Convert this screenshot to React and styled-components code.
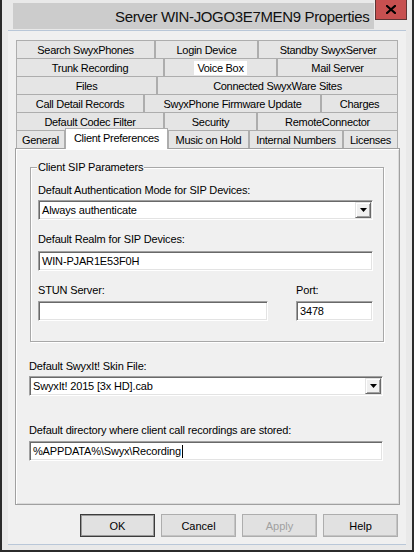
import styled, { createGlobalStyle } from "styled-components";

const GlobalStyle = createGlobalStyle`
  html, body {
    margin: 0;
    padding: 0;
    background: #ffffff;
  }
  body {
    font-family: "Liberation Sans", Arial, sans-serif;
    font-size: 11px;
    color: #000;
  }
  * {
    box-sizing: border-box;
  }
`;

const tabRows = [
  [
    { label: "Search SwyxPhones", w: 139 },
    { label: "Login Device", w: 103 },
    { label: "Standby SwyxServer", w: 140 },
  ],
  [
    { label: "Trunk Recording", w: 148 },
    { label: "Voice Box", w: 113, focus: true },
    { label: "Mail Server", w: 121 },
  ],
  [
    { label: "Files", w: 141 },
    { label: "Connected SwyxWare Sites", w: 241 },
  ],
  [
    { label: "Call Detail Records", w: 128 },
    { label: "SwyxPhone Firmware Update", w: 177 },
    { label: "Charges", w: 77 },
  ],
  [
    { label: "Default Codec Filter", w: 148 },
    { label: "Security", w: 93 },
    { label: "RemoteConnector", w: 141 },
  ],
  [
    { label: "General", w: 49 },
    { label: "Client Preferences", w: 103, active: true },
    { label: "Music on Hold", w: 81 },
    { label: "Internal Numbers", w: 94 },
    { label: "Licenses", w: 55 },
  ],
];

function DropButton() {
  return (
    <DropBtn>
      <svg width="7" height="4" viewBox="0 0 7 4">
        <polygon points="0,0 7,0 3.5,4" fill="#000" />
      </svg>
    </DropBtn>
  );
}

function App() {
  return (
    <>
      <GlobalStyle />
      <Window>
        <TitleBar>
          <Caption>Server WIN-JOGO3E7MEN9 Properties</Caption>
          <CloseButton>
            <svg width="10" height="9" viewBox="0 0 10 9">
              <path d="M1 1 L9 8 M9 1 L1 8" stroke="#000" strokeWidth="2.2" strokeLinecap="square" />
            </svg>
          </CloseButton>
        </TitleBar>

        <Body>
          <Tabs>
            {tabRows.map((row, i) => (
              <TabRow key={i}>
                {row.map((tab) => (
                  <Tab key={tab.label} $w={tab.w} $active={tab.active}>
                    {tab.focus ? <Focus>{tab.label}</Focus> : tab.label}
                  </Tab>
                ))}
              </TabRow>
            ))}
          </Tabs>

          <Panel>
            <Group>
              <Legend>Client SIP Parameters</Legend>
              <Label $mt={10} $mb={3}>Default Authentication Mode for SIP Devices:</Label>
              <Combo $w={335}>
                <span>Always authenticate</span>
                <DropButton />
              </Combo>
              <Label $mt={13} $mb={5}>Default Realm for SIP Devices:</Label>
              <TextBox $w={335}>WIN-PJAR1E53F0H</TextBox>
              <SplitRow>
                <Column>
                  <Label $mb={4}>STUN Server:</Label>
                  <TextBox $w={230} />
                </Column>
                <Column>
                  <Label $mb={4}>Port:</Label>
                  <TextBox $w={77}>3478</TextBox>
                </Column>
              </SplitRow>
            </Group>

            <Label $mt={18} $mb={3}>Default SwyxIt! Skin File:</Label>
            <Combo $w={354}>
              <span>SwyxIt! 2015 [3x HD].cab</span>
              <DropButton />
            </Combo>
            <Label $mt={28} $mb={4}>Default directory where client call recordings are stored:</Label>
            <TextBox $w={354}>
              %APPDATA%\Swyx\Recording
              <Caret />
            </TextBox>
          </Panel>

          <ButtonBar>
            <Button $default>OK</Button>
            <Button>Cancel</Button>
            <Button $disabled>Apply</Button>
            <Button>Help</Button>
          </ButtonBar>
        </Body>
      </Window>
    </>
  );
}

export default App;

const Window = styled.div`
  width: 414px;
  height: 552px;
  display: flex;
  flex-direction: column;
  background: #e9e9e9;
  border: 2px solid #2b2b2b;
  border-top: none;
`;

const TitleBar = styled.div`
  height: 30px;
  display: flex;
  align-items: flex-start;
  padding-left: 11px;
`;

const Caption = styled.div`
  margin-top: 3px;
  width: 361px;
  height: 26px;
  background: #cccccc;
  display: flex;
  align-items: center;
  padding-left: 102px;
  font-size: 15px;
  letter-spacing: -0.35px;
  color: #111;
  white-space: nowrap;
`;

const CloseButton = styled.div`
  margin-left: 1px;
  width: 32px;
  height: 20px;
  background: #c75050;
  border: 1px solid #5e3434;
  border-top: none;
  display: flex;
  align-items: center;
  justify-content: center;
`;

const Body = styled.div`
  flex: 1;
  margin: 0 6px 5px;
  background: #f0f0f0;
  border-top: 1px solid #b9c7d8;
  border-bottom: 1px solid #b9c7d8;
  padding: 9px 0 0 7px;
  display: flex;
  flex-direction: column;
`;

const Tabs = styled.div`
  width: 382px;
  margin-left: 1px;
  display: flex;
  flex-direction: column;
`;

const TabRow = styled.div`
  height: 18px;
  display: flex;
  align-items: flex-start;
`;

const Tab = styled.div`
  width: ${(p) => p.$w}px;
  height: ${(p) => (p.$active ? 21 : 18)}px;
  margin-top: ${(p) => (p.$active ? -2 : 0)}px;
  padding-bottom: ${(p) => (p.$active ? 3 : 0)}px;
  position: relative;
  z-index: ${(p) => (p.$active ? 2 : 0)};
  background: ${(p) => (p.$active ? "#ffffff" : "#e5e5e5")};
  border: 1px solid #adadad;
  border-bottom: none;
  display: flex;
  align-items: center;
  justify-content: center;
  font-size: 11px;
  letter-spacing: -0.3px;
  white-space: nowrap;
`;

const Focus = styled.span`
  background: #ffffff;
  padding: 1px 3px;
`;

const Panel = styled.div`
  width: 385px;
  height: 357px;
  border: 1px solid #a0a0a0;
  box-shadow: inset 1px 1px 0 #ffffff, inset -1px -1px 0 #dadada;
  padding: 11px 0 0 13px;
  display: flex;
  flex-direction: column;
  align-items: flex-start;
`;

const Group = styled.fieldset`
  margin: 0 0 0 1px;
  width: 354px;
  min-width: 0;
  border: 1px solid #a8a8a8;
  box-shadow: inset 1px 1px 0 #ffffff, 1px 1px 0 #ffffff;
  padding: 0 10px 20px 7px;
  display: flex;
  flex-direction: column;
  align-items: flex-start;
`;

const Legend = styled.legend`
  padding: 0 1px;
  margin-left: -1px;
  line-height: 14px;
  font-size: 11px;
  letter-spacing: -0.16px;
  background: #f0f0f0;
`;

const Label = styled.div`
  margin-top: ${(p) => p.$mt || 0}px;
  margin-bottom: ${(p) => p.$mb || 0}px;
  line-height: 13px;
  font-size: 11px;
  letter-spacing: -0.16px;
  white-space: nowrap;
`;

const Sunken = styled.div`
  width: ${(p) => p.$w}px;
  height: 20px;
  background: #ffffff;
  border-top: 1px solid #a0a0a0;
  border-left: 1px solid #a0a0a0;
  border-right: 1px solid #ffffff;
  border-bottom: 1px solid #ffffff;
  box-shadow: inset 1px 1px 0 #696969, inset -1px -1px 0 #e3e3e3;
  display: flex;
  align-items: center;
  font-size: 11px;
  letter-spacing: -0.16px;
  white-space: nowrap;
`;

const Combo = styled(Sunken)`
  justify-content: space-between;
  padding: 0 1px 0 3px;
`;

const TextBox = styled(Sunken)`
  padding-left: 3px;
`;

const DropBtn = styled.div`
  width: 16px;
  height: 16px;
  background: #f0f0f0;
  border-top: 1px solid #e3e3e3;
  border-left: 1px solid #e3e3e3;
  border-right: 1px solid #696969;
  border-bottom: 1px solid #696969;
  box-shadow: inset 1px 1px 0 #ffffff, inset -1px -1px 0 #a0a0a0;
  display: flex;
  align-items: center;
  justify-content: center;
`;

const Caret = styled.span`
  display: inline-block;
  width: 1px;
  height: 13px;
  background: #000;
  margin-left: 1px;
`;

const SplitRow = styled.div`
  margin-top: 13px;
  display: flex;
  gap: 28px;
`;

const Column = styled.div`
  display: flex;
  flex-direction: column;
`;

const ButtonBar = styled.div`
  margin-top: 9px;
  padding-right: 8px;
  display: flex;
  justify-content: flex-end;
  gap: 6px;
`;

const Button = styled.div`
  width: 75px;
  height: 23px;
  background: #e1e1e1;
  border: 1px solid ${(p) => (p.$default ? "#3c3c3c" : "#adadad")};
  box-shadow: ${(p) =>
    p.$default ? "inset 0 0 0 1px #9a9a9a" : "inset -1px -1px 0 #c4c4c4"};
  display: flex;
  align-items: center;
  justify-content: center;
  font-size: 11px;
  color: ${(p) => (p.$disabled ? "#a0a0a0" : "#000")};
`;
